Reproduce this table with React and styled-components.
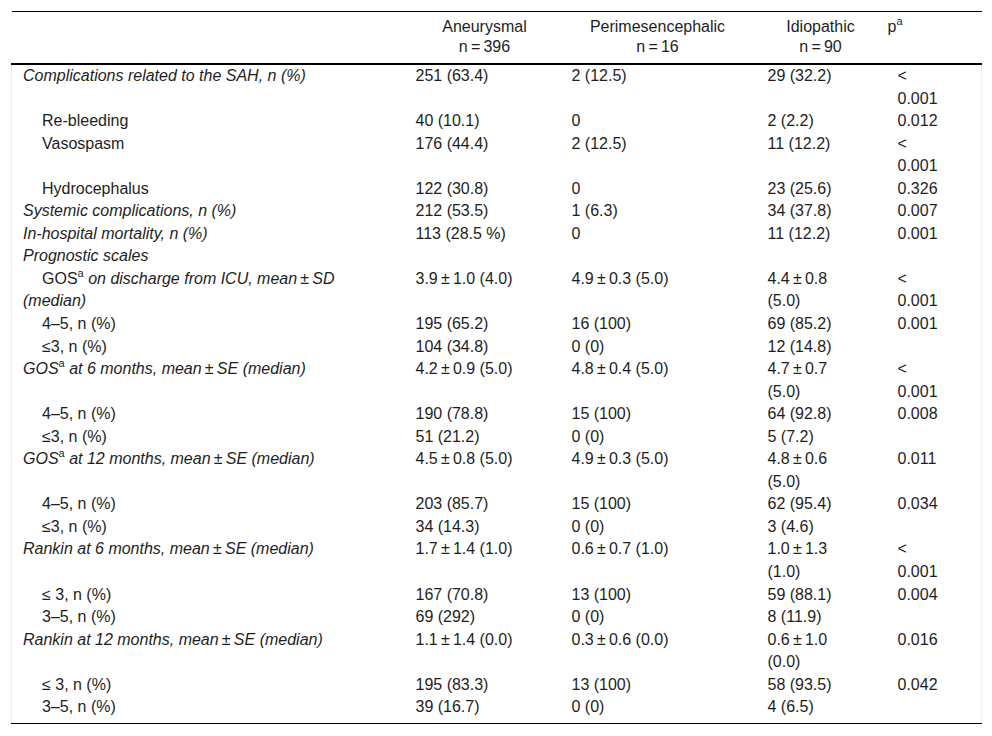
import React from 'react'
import styled, { createGlobalStyle, css } from 'styled-components'

const GlobalStyle = createGlobalStyle`
    html, body {
        margin: 0;
        background: #fff;
    }
    body {
        font-family: "Liberation Sans", Arial, sans-serif;
        color: #1e1e1e;
    }
`

const T = '\u2009'

const columns = [
    { width: 393 },
    { width: 156, label: 'Aneurysmal', n: '396', pad: '0 7px 0 11px' },
    { width: 196, label: 'Perimesencephalic', n: '16', pad: '0 13px 0 11px' },
    { width: 130, label: 'Idiopathic', n: '90', pad: '0 13px 0 11px' },
    { width: 95, label: 'p', sup: 'a', pad: '0 78px 0 0' }
]

const pm = (a, b, c) => `${a}${T}±${T}${b} (${c})`

// italic: group label in italics; sub: indented row
const rows = [
    { italic: true, label: 'Complications related to the SAH, n (%)', v: ['251 (63.4)', '2 (12.5)', '29 (32.2)', '< 0.001'] },
    { sub: true, label: 'Re-bleeding', v: ['40 (10.1)', '0', '2 (2.2)', '0.012'] },
    { sub: true, label: 'Vasospasm', v: ['176 (44.4)', '2 (12.5)', '11 (12.2)', '< 0.001'] },
    { sub: true, label: 'Hydrocephalus', v: ['122 (30.8)', '0', '23 (25.6)', '0.326'] },
    { italic: true, label: 'Systemic complications, n (%)', v: ['212 (53.5)', '1 (6.3)', '34 (37.8)', '0.007'] },
    { italic: true, label: 'In-hospital mortality, n (%)', v: ['113 (28.5 %)', '0', '11 (12.2)', '0.001'] },
    { italic: true, label: 'Prognostic scales', v: ['', '', '', ''] },
    { sub: true, gos: 'upright', label: `on discharge from ICU, mean${T}±${T}SD (median)`, v: [pm('3.9', '1.0', '4.0'), pm('4.9', '0.3', '5.0'), pm('4.4', '0.8', '5.0'), '< 0.001'] },
    { sub: true, label: '4–5, n (%)', v: ['195 (65.2)', '16 (100)', '69 (85.2)', '0.001'] },
    { sub: true, label: '≤3, n (%)', v: ['104 (34.8)', '0 (0)', '12 (14.8)', ''] },
    { gos: 'italic', label: `at 6 months, mean${T}±${T}SE (median)`, v: [pm('4.2', '0.9', '5.0'), pm('4.8', '0.4', '5.0'), pm('4.7', '0.7', '5.0'), '< 0.001'] },
    { sub: true, label: '4–5, n (%)', v: ['190 (78.8)', '15 (100)', '64 (92.8)', '0.008'] },
    { sub: true, label: '≤3, n (%)', v: ['51 (21.2)', '0 (0)', '5 (7.2)', ''] },
    { gos: 'italic', label: `at 12 months, mean${T}±${T}SE (median)`, v: [pm('4.5', '0.8', '5.0'), pm('4.9', '0.3', '5.0'), pm('4.8', '0.6', '5.0'), '0.011'] },
    { sub: true, label: '4–5, n (%)', v: ['203 (85.7)', '15 (100)', '62 (95.4)', '0.034'] },
    { sub: true, label: '≤3, n (%)', v: ['34 (14.3)', '0 (0)', '3 (4.6)', ''] },
    { italic: true, label: `Rankin at 6 months, mean${T}±${T}SE (median)`, v: [pm('1.7', '1.4', '1.0'), pm('0.6', '0.7', '1.0'), pm('1.0', '1.3', '1.0'), '< 0.001'] },
    { sub: true, label: '≤ 3, n (%)', v: ['167 (70.8)', '13 (100)', '59 (88.1)', '0.004'] },
    { sub: true, label: '3–5, n (%)', v: ['69 (292)', '0 (0)', '8 (11.9)', ''] },
    { italic: true, label: `Rankin at 12 months, mean${T}±${T}SE (median)`, v: [pm('1.1', '1.4', '0.0'), pm('0.3', '0.6', '0.0'), pm('0.6', '1.0', '0.0'), '0.016'] },
    { sub: true, label: '≤ 3, n (%)', v: ['195 (83.3)', '13 (100)', '58 (93.5)', '0.042'] },
    { sub: true, label: '3–5, n (%)', v: ['39 (16.7)', '0 (0)', '4 (6.5)', ''] }
]

export default function App() {
    return (
        <>
            <GlobalStyle />
            <Page>
                <Table>
                    <colgroup>
                        {columns.map((c, i) => <col key={i} style={{ width: c.width }} />)}
                    </colgroup>
                    <thead>
                        <tr>
                            {columns.map((c, i) => (
                                <Th key={i} $pad={c.pad}>
                                    {c.label}
                                    {c.sup && <Sup>{c.sup}</Sup>}
                                    {c.n && <><br />n{T}={T}{c.n}</>}
                                </Th>
                            ))}
                        </tr>
                    </thead>
                    <tbody>
                        {rows.map((r, i) => (
                            <Row key={i}>
                                <Label $sub={r.sub}>
                                    {r.gos && (
                                        <>
                                            <Em $on={r.gos === 'italic'}>GOS</Em>
                                            <Sup>a</Sup>{' '}
                                        </>
                                    )}
                                    <Em $on={r.italic || !!r.gos}>{r.label}</Em>
                                </Label>
                                {r.v.map((v, j) => <Cell key={j}>{v}</Cell>)}
                            </Row>
                        ))}
                    </tbody>
                </Table>
            </Page>
        </>
    )
}

const Page = styled.div`
    padding: 11px;
`
const Table = styled.table`
    width: 970px;
    table-layout: fixed;
    border-collapse: collapse;
    font-size: 16px;
    color: #1e1e1e;
`
const Th = styled.th`
    font-weight: normal;
    text-align: center;
    vertical-align: top;
    line-height: 20px;
    padding: ${({ $pad }) => $pad};
    padding-top: 5px;
    padding-bottom: 6px;
    border-top: 1px solid #000;
    border-bottom: 2px solid #000;
`
const Row = styled.tr`
    &:last-child td {
        border-bottom: 1px solid #000;
        padding-bottom: 4px;
    }
`
const Cell = styled.td`
    vertical-align: top;
    line-height: 22.55px;
    padding: 0 37px 0 11px;
    &:last-child {
        border-right: 1px solid #ededed;
    }
`
const Label = styled(Cell)`
    border-left: 1px solid #ededed;
    ${({ $sub }) => $sub && css`
        text-indent: 19px;
    `}
`
const Em = styled.span`
    font-style: ${({ $on }) => $on ? 'italic' : 'normal'};
`
const Sup = styled.sup`
    font-size: 11px;
    line-height: 0;
    vertical-align: 7px;
    font-style: normal;
`
